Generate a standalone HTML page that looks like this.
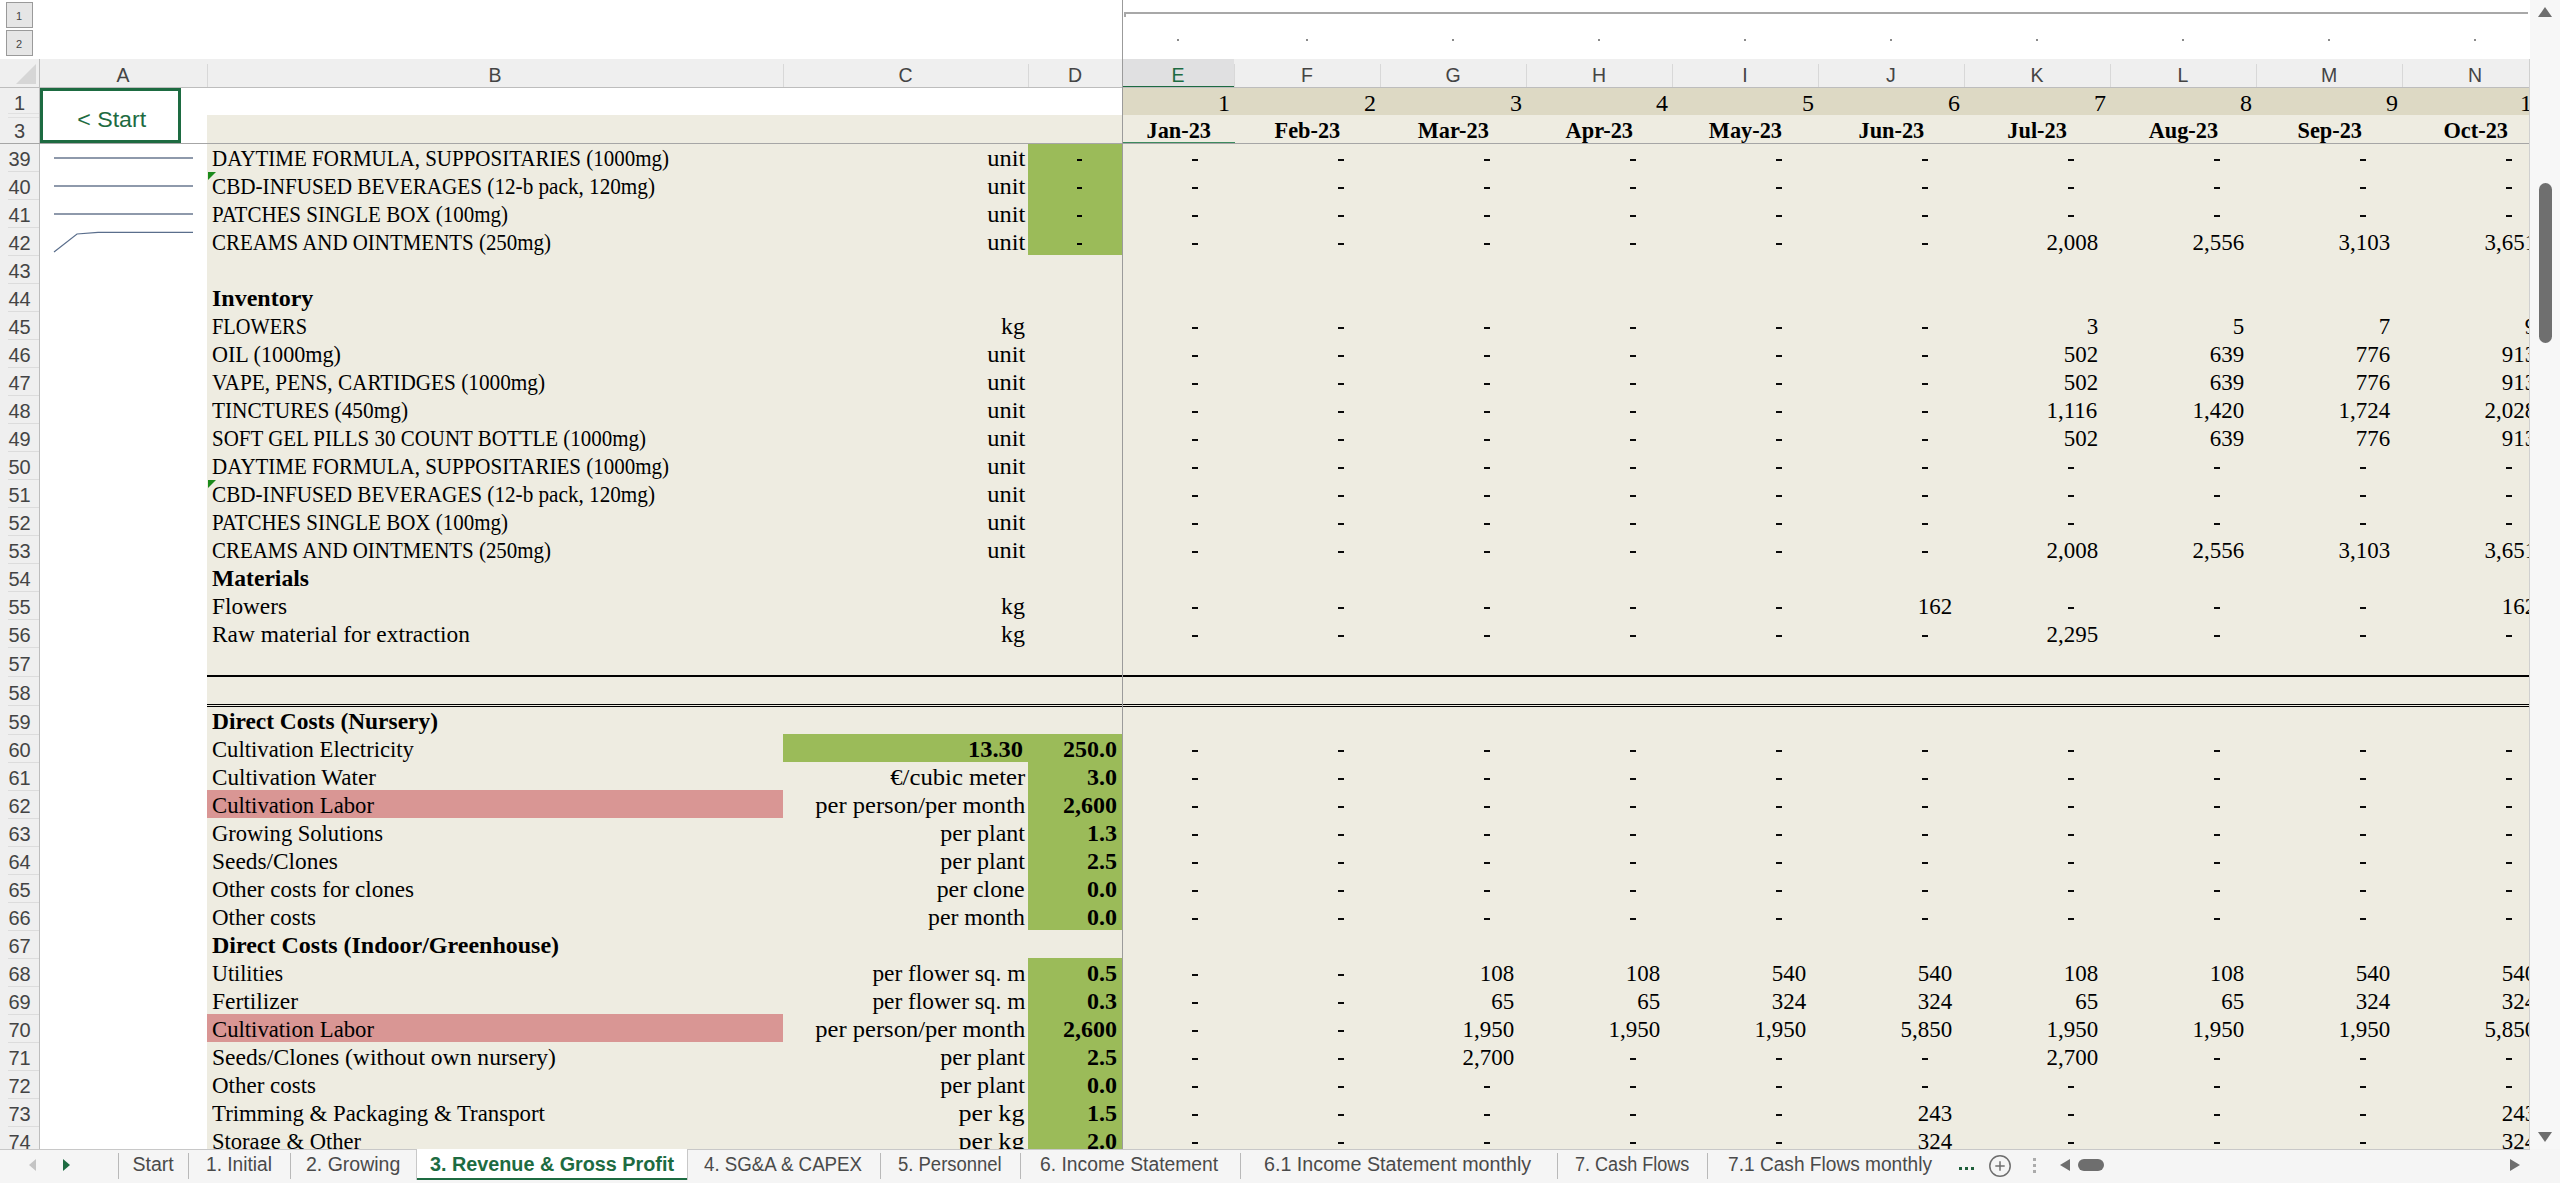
<!DOCTYPE html>
<html><head><meta charset="utf-8"><title>Revenue & Gross Profit</title>
<style>
html,body{margin:0;padding:0;background:#fff;}
#root{position:relative;width:2560px;height:1183px;overflow:hidden;}
#root > div, #root > svg{position:absolute;}
</style></head><body><div id="root">
<div style="left:0px;top:0px;width:2560px;height:1183px;background:#FFFFFF;"></div>
<div style="left:207px;top:115px;width:2323px;height:28px;background:#EEECE1;"></div>
<div style="left:207px;top:143px;width:2323px;height:28px;background:#EEECE1;"></div>
<div style="left:207px;top:171px;width:2323px;height:28px;background:#EEECE1;"></div>
<div style="left:207px;top:199px;width:2323px;height:28px;background:#EEECE1;"></div>
<div style="left:207px;top:227px;width:2323px;height:28px;background:#EEECE1;"></div>
<div style="left:207px;top:255px;width:2323px;height:28px;background:#EEECE1;"></div>
<div style="left:207px;top:283px;width:2323px;height:28px;background:#EEECE1;"></div>
<div style="left:207px;top:311px;width:2323px;height:28px;background:#EEECE1;"></div>
<div style="left:207px;top:339px;width:2323px;height:28px;background:#EEECE1;"></div>
<div style="left:207px;top:367px;width:2323px;height:28px;background:#EEECE1;"></div>
<div style="left:207px;top:395px;width:2323px;height:28px;background:#EEECE1;"></div>
<div style="left:207px;top:423px;width:2323px;height:28px;background:#EEECE1;"></div>
<div style="left:207px;top:451px;width:2323px;height:28px;background:#EEECE1;"></div>
<div style="left:207px;top:479px;width:2323px;height:28px;background:#EEECE1;"></div>
<div style="left:207px;top:507px;width:2323px;height:28px;background:#EEECE1;"></div>
<div style="left:207px;top:535px;width:2323px;height:28px;background:#EEECE1;"></div>
<div style="left:207px;top:563px;width:2323px;height:28px;background:#EEECE1;"></div>
<div style="left:207px;top:591px;width:2323px;height:28px;background:#EEECE1;"></div>
<div style="left:207px;top:619px;width:2323px;height:28px;background:#EEECE1;"></div>
<div style="left:207px;top:647px;width:2323px;height:29px;background:#EEECE1;"></div>
<div style="left:207px;top:676px;width:2323px;height:29px;background:#EEECE1;"></div>
<div style="left:207px;top:705px;width:2323px;height:29px;background:#EEECE1;"></div>
<div style="left:207px;top:734px;width:2323px;height:28px;background:#EEECE1;"></div>
<div style="left:207px;top:762px;width:2323px;height:28px;background:#EEECE1;"></div>
<div style="left:207px;top:790px;width:2323px;height:28px;background:#EEECE1;"></div>
<div style="left:207px;top:818px;width:2323px;height:28px;background:#EEECE1;"></div>
<div style="left:207px;top:846px;width:2323px;height:28px;background:#EEECE1;"></div>
<div style="left:207px;top:874px;width:2323px;height:28px;background:#EEECE1;"></div>
<div style="left:207px;top:902px;width:2323px;height:28px;background:#EEECE1;"></div>
<div style="left:207px;top:930px;width:2323px;height:28px;background:#EEECE1;"></div>
<div style="left:207px;top:958px;width:2323px;height:28px;background:#EEECE1;"></div>
<div style="left:207px;top:986px;width:2323px;height:28px;background:#EEECE1;"></div>
<div style="left:207px;top:1014px;width:2323px;height:28px;background:#EEECE1;"></div>
<div style="left:207px;top:1042px;width:2323px;height:28px;background:#EEECE1;"></div>
<div style="left:207px;top:1070px;width:2323px;height:28px;background:#EEECE1;"></div>
<div style="left:207px;top:1098px;width:2323px;height:28px;background:#EEECE1;"></div>
<div style="left:207px;top:1126px;width:2323px;height:23px;background:#EEECE1;"></div>
<div style="left:1122px;top:87px;width:1408px;height:28px;background:#DDD9C4;"></div>
<div style="left:1028px;top:143px;width:94px;height:112px;background:#9BBB59;"></div>
<div style="left:783px;top:734px;width:339px;height:28px;background:#9BBB59;"></div>
<div style="left:1028px;top:762px;width:94px;height:168px;background:#9BBB59;"></div>
<div style="left:1028px;top:958px;width:94px;height:191px;background:#9BBB59;"></div>
<div style="left:207px;top:790px;width:576px;height:28px;background:#D99694;"></div>
<div style="left:207px;top:1014px;width:576px;height:28px;background:#D99694;"></div>
<div style="left:207px;top:675px;width:2323px;height:2px;background:#000;"></div>
<div style="left:207px;top:704px;width:2323px;height:1px;background:#000;"></div>
<div style="left:207px;top:706px;width:2323px;height:1px;background:#000;"></div>
<div style="left:212.00px;top:143.40px;width:524.56px;height:31px;line-height:31px;font-family:'Liberation Serif', serif;font-size:24px;color:#000;white-space:nowrap;transform:scaleX(0.8745);transform-origin:left;">DAYTIME FORMULA, SUPPOSITARIES (1000mg)</div>
<div style="left:212.00px;top:171.40px;width:504.00px;height:31px;line-height:31px;font-family:'Liberation Serif', serif;font-size:24px;color:#000;white-space:nowrap;transform:scaleX(0.8825);transform-origin:left;">CBD-INFUSED BEVERAGES (12-b pack, 120mg)</div>
<div style="left:212.00px;top:199.40px;width:340.47px;height:31px;line-height:31px;font-family:'Liberation Serif', serif;font-size:24px;color:#000;white-space:nowrap;transform:scaleX(0.8745);transform-origin:left;">PATCHES SINGLE BOX (100mg)</div>
<div style="left:212.00px;top:227.40px;width:390.67px;height:31px;line-height:31px;font-family:'Liberation Serif', serif;font-size:24px;color:#000;white-space:nowrap;transform:scaleX(0.8722);transform-origin:left;">CREAMS AND OINTMENTS (250mg)</div>
<div style="left:212.00px;top:283.40px;width:103.34px;height:31px;line-height:31px;font-family:'Liberation Serif', serif;font-size:24px;font-weight:bold;color:#000;white-space:nowrap;">Inventory</div>
<div style="left:212.00px;top:311.40px;width:114.00px;height:31px;line-height:31px;font-family:'Liberation Serif', serif;font-size:24px;color:#000;white-space:nowrap;transform:scaleX(0.8482);transform-origin:left;">FLOWERS</div>
<div style="left:212.00px;top:339.40px;width:141.77px;height:31px;line-height:31px;font-family:'Liberation Serif', serif;font-size:24px;color:#000;white-space:nowrap;transform:scaleX(0.9230);transform-origin:left;">OIL (1000mg)</div>
<div style="left:212.00px;top:367.40px;width:378.14px;height:31px;line-height:31px;font-family:'Liberation Serif', serif;font-size:24px;color:#000;white-space:nowrap;transform:scaleX(0.8853);transform-origin:left;">VAPE, PENS, CARTIDGES (1000mg)</div>
<div style="left:212.00px;top:395.40px;width:222.67px;height:31px;line-height:31px;font-family:'Liberation Serif', serif;font-size:24px;color:#000;white-space:nowrap;transform:scaleX(0.8882);transform-origin:left;">TINCTURES (450mg)</div>
<div style="left:212.00px;top:423.40px;width:498.84px;height:31px;line-height:31px;font-family:'Liberation Serif', serif;font-size:24px;color:#000;white-space:nowrap;transform:scaleX(0.8735);transform-origin:left;">SOFT GEL PILLS 30 COUNT BOTTLE (1000mg)</div>
<div style="left:212.00px;top:451.40px;width:524.56px;height:31px;line-height:31px;font-family:'Liberation Serif', serif;font-size:24px;color:#000;white-space:nowrap;transform:scaleX(0.8745);transform-origin:left;">DAYTIME FORMULA, SUPPOSITARIES (1000mg)</div>
<div style="left:212.00px;top:479.40px;width:504.00px;height:31px;line-height:31px;font-family:'Liberation Serif', serif;font-size:24px;color:#000;white-space:nowrap;transform:scaleX(0.8825);transform-origin:left;">CBD-INFUSED BEVERAGES (12-b pack, 120mg)</div>
<div style="left:212.00px;top:507.40px;width:340.47px;height:31px;line-height:31px;font-family:'Liberation Serif', serif;font-size:24px;color:#000;white-space:nowrap;transform:scaleX(0.8745);transform-origin:left;">PATCHES SINGLE BOX (100mg)</div>
<div style="left:212.00px;top:535.40px;width:390.67px;height:31px;line-height:31px;font-family:'Liberation Serif', serif;font-size:24px;color:#000;white-space:nowrap;transform:scaleX(0.8722);transform-origin:left;">CREAMS AND OINTMENTS (250mg)</div>
<div style="left:212.00px;top:563.40px;width:100.66px;height:31px;line-height:31px;font-family:'Liberation Serif', serif;font-size:24px;font-weight:bold;color:#000;white-space:nowrap;transform:scaleX(0.9832);transform-origin:left;">Materials</div>
<div style="left:212.00px;top:591.40px;width:79.34px;height:31px;line-height:31px;font-family:'Liberation Serif', serif;font-size:24px;color:#000;white-space:nowrap;transform:scaleX(0.9697);transform-origin:left;">Flowers</div>
<div style="left:212.00px;top:619.40px;width:266.64px;height:31px;line-height:31px;font-family:'Liberation Serif', serif;font-size:24px;color:#000;white-space:nowrap;transform:scaleX(0.9749);transform-origin:left;">Raw material for extraction</div>
<div style="left:212.00px;top:706.40px;width:233.53px;height:31px;line-height:31px;font-family:'Liberation Serif', serif;font-size:24px;font-weight:bold;color:#000;white-space:nowrap;transform:scaleX(0.9761);transform-origin:left;">Direct Costs (Nursery)</div>
<div style="left:212.00px;top:734.40px;width:216.02px;height:31px;line-height:31px;font-family:'Liberation Serif', serif;font-size:24px;color:#000;white-space:nowrap;transform:scaleX(0.9439);transform-origin:left;">Cultivation Electricity</div>
<div style="left:212.00px;top:762.40px;width:172.31px;height:31px;line-height:31px;font-family:'Liberation Serif', serif;font-size:24px;color:#000;white-space:nowrap;transform:scaleX(0.9629);transform-origin:left;">Cultivation Water</div>
<div style="left:212.00px;top:790.40px;width:173.34px;height:31px;line-height:31px;font-family:'Liberation Serif', serif;font-size:24px;color:#000;white-space:nowrap;transform:scaleX(0.9455);transform-origin:left;">Cultivation Labor</div>
<div style="left:212.00px;top:818.40px;width:184.03px;height:31px;line-height:31px;font-family:'Liberation Serif', serif;font-size:24px;color:#000;white-space:nowrap;transform:scaleX(0.9394);transform-origin:left;">Growing Solutions</div>
<div style="left:212.00px;top:846.40px;width:131.36px;height:31px;line-height:31px;font-family:'Liberation Serif', serif;font-size:24px;color:#000;white-space:nowrap;transform:scaleX(0.9740);transform-origin:left;">Seeds/Clones</div>
<div style="left:212.00px;top:874.40px;width:212.00px;height:31px;line-height:31px;font-family:'Liberation Serif', serif;font-size:24px;color:#000;white-space:nowrap;transform:scaleX(0.9619);transform-origin:left;">Other costs for clones</div>
<div style="left:212.00px;top:902.40px;width:110.67px;height:31px;line-height:31px;font-family:'Liberation Serif', serif;font-size:24px;color:#000;white-space:nowrap;transform:scaleX(0.9570);transform-origin:left;">Other costs</div>
<div style="left:212.00px;top:930.40px;width:349.14px;height:31px;line-height:31px;font-family:'Liberation Serif', serif;font-size:24px;font-weight:bold;color:#000;white-space:nowrap;">Direct Costs (Indoor/Greenhouse)</div>
<div style="left:212.00px;top:958.40px;width:79.36px;height:31px;line-height:31px;font-family:'Liberation Serif', serif;font-size:24px;color:#000;white-space:nowrap;transform:scaleX(0.9178);transform-origin:left;">Utilities</div>
<div style="left:212.00px;top:986.40px;width:90.00px;height:31px;line-height:31px;font-family:'Liberation Serif', serif;font-size:24px;color:#000;white-space:nowrap;transform:scaleX(0.9773);transform-origin:left;">Fertilizer</div>
<div style="left:212.00px;top:1014.40px;width:173.34px;height:31px;line-height:31px;font-family:'Liberation Serif', serif;font-size:24px;color:#000;white-space:nowrap;transform:scaleX(0.9455);transform-origin:left;">Cultivation Labor</div>
<div style="left:212.00px;top:1042.40px;width:352.03px;height:31px;line-height:31px;font-family:'Liberation Serif', serif;font-size:24px;color:#000;white-space:nowrap;transform:scaleX(0.9828);transform-origin:left;">Seeds/Clones (without own nursery)</div>
<div style="left:212.00px;top:1070.40px;width:110.67px;height:31px;line-height:31px;font-family:'Liberation Serif', serif;font-size:24px;color:#000;white-space:nowrap;transform:scaleX(0.9570);transform-origin:left;">Other costs</div>
<div style="left:212.00px;top:1098.40px;width:351.88px;height:31px;line-height:31px;font-family:'Liberation Serif', serif;font-size:24px;color:#000;white-space:nowrap;transform:scaleX(0.9518);transform-origin:left;">Trimming &amp; Packaging &amp; Transport</div>
<div style="left:212.00px;top:1126.40px;width:160.66px;height:31px;line-height:31px;font-family:'Liberation Serif', serif;font-size:24px;color:#000;white-space:nowrap;transform:scaleX(0.9391);transform-origin:left;">Storage &amp; Other</div>
<div style="left:987.66px;top:143.40px;width:39.34px;height:31px;line-height:31px;font-family:'Liberation Serif', serif;font-size:24px;color:#000;white-space:nowrap;transform:scaleX(1.0176);transform-origin:right;">unit</div>
<div style="left:987.66px;top:171.40px;width:39.34px;height:31px;line-height:31px;font-family:'Liberation Serif', serif;font-size:24px;color:#000;white-space:nowrap;transform:scaleX(1.0176);transform-origin:right;">unit</div>
<div style="left:987.66px;top:199.40px;width:39.34px;height:31px;line-height:31px;font-family:'Liberation Serif', serif;font-size:24px;color:#000;white-space:nowrap;transform:scaleX(1.0176);transform-origin:right;">unit</div>
<div style="left:987.66px;top:227.40px;width:39.34px;height:31px;line-height:31px;font-family:'Liberation Serif', serif;font-size:24px;color:#000;white-space:nowrap;transform:scaleX(1.0176);transform-origin:right;">unit</div>
<div style="left:1001.00px;top:311.40px;width:26.00px;height:31px;line-height:31px;font-family:'Liberation Serif', serif;font-size:24px;color:#000;white-space:nowrap;">kg</div>
<div style="left:987.66px;top:339.40px;width:39.34px;height:31px;line-height:31px;font-family:'Liberation Serif', serif;font-size:24px;color:#000;white-space:nowrap;transform:scaleX(1.0176);transform-origin:right;">unit</div>
<div style="left:987.66px;top:367.40px;width:39.34px;height:31px;line-height:31px;font-family:'Liberation Serif', serif;font-size:24px;color:#000;white-space:nowrap;transform:scaleX(1.0176);transform-origin:right;">unit</div>
<div style="left:987.66px;top:395.40px;width:39.34px;height:31px;line-height:31px;font-family:'Liberation Serif', serif;font-size:24px;color:#000;white-space:nowrap;transform:scaleX(1.0176);transform-origin:right;">unit</div>
<div style="left:987.66px;top:423.40px;width:39.34px;height:31px;line-height:31px;font-family:'Liberation Serif', serif;font-size:24px;color:#000;white-space:nowrap;transform:scaleX(1.0176);transform-origin:right;">unit</div>
<div style="left:987.66px;top:451.40px;width:39.34px;height:31px;line-height:31px;font-family:'Liberation Serif', serif;font-size:24px;color:#000;white-space:nowrap;transform:scaleX(1.0176);transform-origin:right;">unit</div>
<div style="left:987.66px;top:479.40px;width:39.34px;height:31px;line-height:31px;font-family:'Liberation Serif', serif;font-size:24px;color:#000;white-space:nowrap;transform:scaleX(1.0176);transform-origin:right;">unit</div>
<div style="left:987.66px;top:507.40px;width:39.34px;height:31px;line-height:31px;font-family:'Liberation Serif', serif;font-size:24px;color:#000;white-space:nowrap;transform:scaleX(1.0176);transform-origin:right;">unit</div>
<div style="left:987.66px;top:535.40px;width:39.34px;height:31px;line-height:31px;font-family:'Liberation Serif', serif;font-size:24px;color:#000;white-space:nowrap;transform:scaleX(1.0176);transform-origin:right;">unit</div>
<div style="left:1001.00px;top:591.40px;width:26.00px;height:31px;line-height:31px;font-family:'Liberation Serif', serif;font-size:24px;color:#000;white-space:nowrap;">kg</div>
<div style="left:1001.00px;top:619.40px;width:26.00px;height:31px;line-height:31px;font-family:'Liberation Serif', serif;font-size:24px;color:#000;white-space:nowrap;">kg</div>
<div style="left:893.69px;top:762.40px;width:133.31px;height:31px;line-height:31px;font-family:'Liberation Serif', serif;font-size:24px;color:#000;white-space:nowrap;transform:scaleX(1.0281);transform-origin:right;">€/cubic meter</div>
<div style="left:819.67px;top:790.40px;width:207.33px;height:31px;line-height:31px;font-family:'Liberation Serif', serif;font-size:24px;color:#000;white-space:nowrap;transform:scaleX(1.0228);transform-origin:right;">per person/per month</div>
<div style="left:940.34px;top:818.40px;width:86.66px;height:31px;line-height:31px;font-family:'Liberation Serif', serif;font-size:24px;color:#000;white-space:nowrap;">per plant</div>
<div style="left:940.34px;top:846.40px;width:86.66px;height:31px;line-height:31px;font-family:'Liberation Serif', serif;font-size:24px;color:#000;white-space:nowrap;">per plant</div>
<div style="left:936.36px;top:874.40px;width:90.64px;height:31px;line-height:31px;font-family:'Liberation Serif', serif;font-size:24px;color:#000;white-space:nowrap;transform:scaleX(0.9928);transform-origin:right;">per clone</div>
<div style="left:927.00px;top:902.40px;width:100.00px;height:31px;line-height:31px;font-family:'Liberation Serif', serif;font-size:24px;color:#000;white-space:nowrap;transform:scaleX(0.9898);transform-origin:right;">per month</div>
<div style="left:867.67px;top:958.40px;width:159.33px;height:31px;line-height:31px;font-family:'Liberation Serif', serif;font-size:24px;color:#000;white-space:nowrap;transform:scaleX(0.9725);transform-origin:right;">per flower sq. m</div>
<div style="left:867.67px;top:986.40px;width:159.33px;height:31px;line-height:31px;font-family:'Liberation Serif', serif;font-size:24px;color:#000;white-space:nowrap;transform:scaleX(0.9725);transform-origin:right;">per flower sq. m</div>
<div style="left:819.67px;top:1014.40px;width:207.33px;height:31px;line-height:31px;font-family:'Liberation Serif', serif;font-size:24px;color:#000;white-space:nowrap;transform:scaleX(1.0228);transform-origin:right;">per person/per month</div>
<div style="left:940.34px;top:1042.40px;width:86.66px;height:31px;line-height:31px;font-family:'Liberation Serif', serif;font-size:24px;color:#000;white-space:nowrap;">per plant</div>
<div style="left:940.34px;top:1070.40px;width:86.66px;height:31px;line-height:31px;font-family:'Liberation Serif', serif;font-size:24px;color:#000;white-space:nowrap;">per plant</div>
<div style="left:964.34px;top:1098.40px;width:62.66px;height:31px;line-height:31px;font-family:'Liberation Serif', serif;font-size:24px;color:#000;white-space:nowrap;transform:scaleX(1.0881);transform-origin:right;">per kg</div>
<div style="left:964.34px;top:1126.40px;width:62.66px;height:31px;line-height:31px;font-family:'Liberation Serif', serif;font-size:24px;color:#000;white-space:nowrap;transform:scaleX(1.0881);transform-origin:right;">per kg</div>
<div style="left:969.00px;top:734.40px;width:56.00px;height:31px;line-height:31px;font-family:'Liberation Serif', serif;font-size:24px;font-weight:bold;color:#000;white-space:nowrap;transform:scaleX(1.0185);transform-origin:right;">13.30</div>
<div style="left:1077px;top:159px;width:5px;height:2px;background:#000;"></div>
<div style="left:1077px;top:187px;width:5px;height:2px;background:#000;"></div>
<div style="left:1077px;top:215px;width:5px;height:2px;background:#000;"></div>
<div style="left:1077px;top:243px;width:5px;height:2px;background:#000;"></div>
<div style="left:1063.00px;top:734.40px;width:56.00px;height:31px;line-height:31px;font-family:'Liberation Serif', serif;font-size:24px;font-weight:bold;color:#000;white-space:nowrap;">250.0</div>
<div style="left:1087.00px;top:762.40px;width:32.00px;height:31px;line-height:31px;font-family:'Liberation Serif', serif;font-size:24px;font-weight:bold;color:#000;white-space:nowrap;">3.0</div>
<div style="left:1063.00px;top:790.40px;width:56.00px;height:31px;line-height:31px;font-family:'Liberation Serif', serif;font-size:24px;font-weight:bold;color:#000;white-space:nowrap;">2,600</div>
<div style="left:1087.00px;top:818.40px;width:32.00px;height:31px;line-height:31px;font-family:'Liberation Serif', serif;font-size:24px;font-weight:bold;color:#000;white-space:nowrap;">1.3</div>
<div style="left:1087.00px;top:846.40px;width:32.00px;height:31px;line-height:31px;font-family:'Liberation Serif', serif;font-size:24px;font-weight:bold;color:#000;white-space:nowrap;">2.5</div>
<div style="left:1087.00px;top:874.40px;width:32.00px;height:31px;line-height:31px;font-family:'Liberation Serif', serif;font-size:24px;font-weight:bold;color:#000;white-space:nowrap;">0.0</div>
<div style="left:1087.00px;top:902.40px;width:32.00px;height:31px;line-height:31px;font-family:'Liberation Serif', serif;font-size:24px;font-weight:bold;color:#000;white-space:nowrap;">0.0</div>
<div style="left:1087.00px;top:958.40px;width:32.00px;height:31px;line-height:31px;font-family:'Liberation Serif', serif;font-size:24px;font-weight:bold;color:#000;white-space:nowrap;">0.5</div>
<div style="left:1087.00px;top:986.40px;width:32.00px;height:31px;line-height:31px;font-family:'Liberation Serif', serif;font-size:24px;font-weight:bold;color:#000;white-space:nowrap;">0.3</div>
<div style="left:1063.00px;top:1014.40px;width:56.00px;height:31px;line-height:31px;font-family:'Liberation Serif', serif;font-size:24px;font-weight:bold;color:#000;white-space:nowrap;">2,600</div>
<div style="left:1087.00px;top:1042.40px;width:32.00px;height:31px;line-height:31px;font-family:'Liberation Serif', serif;font-size:24px;font-weight:bold;color:#000;white-space:nowrap;">2.5</div>
<div style="left:1087.00px;top:1070.40px;width:32.00px;height:31px;line-height:31px;font-family:'Liberation Serif', serif;font-size:24px;font-weight:bold;color:#000;white-space:nowrap;">0.0</div>
<div style="left:1087.00px;top:1098.40px;width:32.00px;height:31px;line-height:31px;font-family:'Liberation Serif', serif;font-size:24px;font-weight:bold;color:#000;white-space:nowrap;">1.5</div>
<div style="left:1087.00px;top:1126.40px;width:32.00px;height:31px;line-height:31px;font-family:'Liberation Serif', serif;font-size:24px;font-weight:bold;color:#000;white-space:nowrap;">2.0</div>
<div style="left:1192px;top:159px;width:6px;height:2px;background:#0a0a0a;"></div>
<div style="left:1338px;top:159px;width:6px;height:2px;background:#0a0a0a;"></div>
<div style="left:1484px;top:159px;width:6px;height:2px;background:#0a0a0a;"></div>
<div style="left:1630px;top:159px;width:6px;height:2px;background:#0a0a0a;"></div>
<div style="left:1776px;top:159px;width:6px;height:2px;background:#0a0a0a;"></div>
<div style="left:1922px;top:159px;width:6px;height:2px;background:#0a0a0a;"></div>
<div style="left:2068px;top:159px;width:6px;height:2px;background:#0a0a0a;"></div>
<div style="left:2214px;top:159px;width:6px;height:2px;background:#0a0a0a;"></div>
<div style="left:2360px;top:159px;width:6px;height:2px;background:#0a0a0a;"></div>
<div style="left:2506px;top:159px;width:6px;height:2px;background:#0a0a0a;"></div>
<div style="left:1192px;top:187px;width:6px;height:2px;background:#0a0a0a;"></div>
<div style="left:1338px;top:187px;width:6px;height:2px;background:#0a0a0a;"></div>
<div style="left:1484px;top:187px;width:6px;height:2px;background:#0a0a0a;"></div>
<div style="left:1630px;top:187px;width:6px;height:2px;background:#0a0a0a;"></div>
<div style="left:1776px;top:187px;width:6px;height:2px;background:#0a0a0a;"></div>
<div style="left:1922px;top:187px;width:6px;height:2px;background:#0a0a0a;"></div>
<div style="left:2068px;top:187px;width:6px;height:2px;background:#0a0a0a;"></div>
<div style="left:2214px;top:187px;width:6px;height:2px;background:#0a0a0a;"></div>
<div style="left:2360px;top:187px;width:6px;height:2px;background:#0a0a0a;"></div>
<div style="left:2506px;top:187px;width:6px;height:2px;background:#0a0a0a;"></div>
<div style="left:1192px;top:215px;width:6px;height:2px;background:#0a0a0a;"></div>
<div style="left:1338px;top:215px;width:6px;height:2px;background:#0a0a0a;"></div>
<div style="left:1484px;top:215px;width:6px;height:2px;background:#0a0a0a;"></div>
<div style="left:1630px;top:215px;width:6px;height:2px;background:#0a0a0a;"></div>
<div style="left:1776px;top:215px;width:6px;height:2px;background:#0a0a0a;"></div>
<div style="left:1922px;top:215px;width:6px;height:2px;background:#0a0a0a;"></div>
<div style="left:2068px;top:215px;width:6px;height:2px;background:#0a0a0a;"></div>
<div style="left:2214px;top:215px;width:6px;height:2px;background:#0a0a0a;"></div>
<div style="left:2360px;top:215px;width:6px;height:2px;background:#0a0a0a;"></div>
<div style="left:2506px;top:215px;width:6px;height:2px;background:#0a0a0a;"></div>
<div style="left:1192px;top:243px;width:6px;height:2px;background:#0a0a0a;"></div>
<div style="left:1338px;top:243px;width:6px;height:2px;background:#0a0a0a;"></div>
<div style="left:1484px;top:243px;width:6px;height:2px;background:#0a0a0a;"></div>
<div style="left:1630px;top:243px;width:6px;height:2px;background:#0a0a0a;"></div>
<div style="left:1776px;top:243px;width:6px;height:2px;background:#0a0a0a;"></div>
<div style="left:1922px;top:243px;width:6px;height:2px;background:#0a0a0a;"></div>
<div style="left:2043.50px;top:227.40px;width:56.00px;height:31px;line-height:31px;font-family:'Liberation Serif', serif;font-size:24px;color:#000;white-space:nowrap;transform:scaleX(0.9550);transform-origin:right;">2,008</div>
<div style="left:2189.50px;top:227.40px;width:56.00px;height:31px;line-height:31px;font-family:'Liberation Serif', serif;font-size:24px;color:#000;white-space:nowrap;transform:scaleX(0.9550);transform-origin:right;">2,556</div>
<div style="left:2335.50px;top:227.40px;width:56.00px;height:31px;line-height:31px;font-family:'Liberation Serif', serif;font-size:24px;color:#000;white-space:nowrap;transform:scaleX(0.9550);transform-origin:right;">3,103</div>
<div style="left:2481.50px;top:227.40px;width:56.00px;height:31px;line-height:31px;font-family:'Liberation Serif', serif;font-size:24px;color:#000;white-space:nowrap;transform:scaleX(0.9550);transform-origin:right;">3,651</div>
<div style="left:1192px;top:327px;width:6px;height:2px;background:#0a0a0a;"></div>
<div style="left:1338px;top:327px;width:6px;height:2px;background:#0a0a0a;"></div>
<div style="left:1484px;top:327px;width:6px;height:2px;background:#0a0a0a;"></div>
<div style="left:1630px;top:327px;width:6px;height:2px;background:#0a0a0a;"></div>
<div style="left:1776px;top:327px;width:6px;height:2px;background:#0a0a0a;"></div>
<div style="left:1922px;top:327px;width:6px;height:2px;background:#0a0a0a;"></div>
<div style="left:2085.50px;top:311.40px;width:14.00px;height:31px;line-height:31px;font-family:'Liberation Serif', serif;font-size:24px;color:#000;white-space:nowrap;transform:scaleX(0.9550);transform-origin:right;">3</div>
<div style="left:2231.50px;top:311.40px;width:14.00px;height:31px;line-height:31px;font-family:'Liberation Serif', serif;font-size:24px;color:#000;white-space:nowrap;transform:scaleX(0.9550);transform-origin:right;">5</div>
<div style="left:2377.50px;top:311.40px;width:14.00px;height:31px;line-height:31px;font-family:'Liberation Serif', serif;font-size:24px;color:#000;white-space:nowrap;transform:scaleX(0.9550);transform-origin:right;">7</div>
<div style="left:2523.50px;top:311.40px;width:14.00px;height:31px;line-height:31px;font-family:'Liberation Serif', serif;font-size:24px;color:#000;white-space:nowrap;transform:scaleX(0.9550);transform-origin:right;">9</div>
<div style="left:1192px;top:355px;width:6px;height:2px;background:#0a0a0a;"></div>
<div style="left:1338px;top:355px;width:6px;height:2px;background:#0a0a0a;"></div>
<div style="left:1484px;top:355px;width:6px;height:2px;background:#0a0a0a;"></div>
<div style="left:1630px;top:355px;width:6px;height:2px;background:#0a0a0a;"></div>
<div style="left:1776px;top:355px;width:6px;height:2px;background:#0a0a0a;"></div>
<div style="left:1922px;top:355px;width:6px;height:2px;background:#0a0a0a;"></div>
<div style="left:2061.50px;top:339.40px;width:38.00px;height:31px;line-height:31px;font-family:'Liberation Serif', serif;font-size:24px;color:#000;white-space:nowrap;transform:scaleX(0.9550);transform-origin:right;">502</div>
<div style="left:2207.50px;top:339.40px;width:38.00px;height:31px;line-height:31px;font-family:'Liberation Serif', serif;font-size:24px;color:#000;white-space:nowrap;transform:scaleX(0.9550);transform-origin:right;">639</div>
<div style="left:2353.50px;top:339.40px;width:38.00px;height:31px;line-height:31px;font-family:'Liberation Serif', serif;font-size:24px;color:#000;white-space:nowrap;transform:scaleX(0.9550);transform-origin:right;">776</div>
<div style="left:2499.50px;top:339.40px;width:38.00px;height:31px;line-height:31px;font-family:'Liberation Serif', serif;font-size:24px;color:#000;white-space:nowrap;transform:scaleX(0.9550);transform-origin:right;">913</div>
<div style="left:1192px;top:383px;width:6px;height:2px;background:#0a0a0a;"></div>
<div style="left:1338px;top:383px;width:6px;height:2px;background:#0a0a0a;"></div>
<div style="left:1484px;top:383px;width:6px;height:2px;background:#0a0a0a;"></div>
<div style="left:1630px;top:383px;width:6px;height:2px;background:#0a0a0a;"></div>
<div style="left:1776px;top:383px;width:6px;height:2px;background:#0a0a0a;"></div>
<div style="left:1922px;top:383px;width:6px;height:2px;background:#0a0a0a;"></div>
<div style="left:2061.50px;top:367.40px;width:38.00px;height:31px;line-height:31px;font-family:'Liberation Serif', serif;font-size:24px;color:#000;white-space:nowrap;transform:scaleX(0.9550);transform-origin:right;">502</div>
<div style="left:2207.50px;top:367.40px;width:38.00px;height:31px;line-height:31px;font-family:'Liberation Serif', serif;font-size:24px;color:#000;white-space:nowrap;transform:scaleX(0.9550);transform-origin:right;">639</div>
<div style="left:2353.50px;top:367.40px;width:38.00px;height:31px;line-height:31px;font-family:'Liberation Serif', serif;font-size:24px;color:#000;white-space:nowrap;transform:scaleX(0.9550);transform-origin:right;">776</div>
<div style="left:2499.50px;top:367.40px;width:38.00px;height:31px;line-height:31px;font-family:'Liberation Serif', serif;font-size:24px;color:#000;white-space:nowrap;transform:scaleX(0.9550);transform-origin:right;">913</div>
<div style="left:1192px;top:411px;width:6px;height:2px;background:#0a0a0a;"></div>
<div style="left:1338px;top:411px;width:6px;height:2px;background:#0a0a0a;"></div>
<div style="left:1484px;top:411px;width:6px;height:2px;background:#0a0a0a;"></div>
<div style="left:1630px;top:411px;width:6px;height:2px;background:#0a0a0a;"></div>
<div style="left:1776px;top:411px;width:6px;height:2px;background:#0a0a0a;"></div>
<div style="left:1922px;top:411px;width:6px;height:2px;background:#0a0a0a;"></div>
<div style="left:2044.39px;top:395.40px;width:55.11px;height:31px;line-height:31px;font-family:'Liberation Serif', serif;font-size:24px;color:#000;white-space:nowrap;transform:scaleX(0.9550);transform-origin:right;">1,116</div>
<div style="left:2189.50px;top:395.40px;width:56.00px;height:31px;line-height:31px;font-family:'Liberation Serif', serif;font-size:24px;color:#000;white-space:nowrap;transform:scaleX(0.9550);transform-origin:right;">1,420</div>
<div style="left:2335.50px;top:395.40px;width:56.00px;height:31px;line-height:31px;font-family:'Liberation Serif', serif;font-size:24px;color:#000;white-space:nowrap;transform:scaleX(0.9550);transform-origin:right;">1,724</div>
<div style="left:2481.50px;top:395.40px;width:56.00px;height:31px;line-height:31px;font-family:'Liberation Serif', serif;font-size:24px;color:#000;white-space:nowrap;transform:scaleX(0.9550);transform-origin:right;">2,028</div>
<div style="left:1192px;top:439px;width:6px;height:2px;background:#0a0a0a;"></div>
<div style="left:1338px;top:439px;width:6px;height:2px;background:#0a0a0a;"></div>
<div style="left:1484px;top:439px;width:6px;height:2px;background:#0a0a0a;"></div>
<div style="left:1630px;top:439px;width:6px;height:2px;background:#0a0a0a;"></div>
<div style="left:1776px;top:439px;width:6px;height:2px;background:#0a0a0a;"></div>
<div style="left:1922px;top:439px;width:6px;height:2px;background:#0a0a0a;"></div>
<div style="left:2061.50px;top:423.40px;width:38.00px;height:31px;line-height:31px;font-family:'Liberation Serif', serif;font-size:24px;color:#000;white-space:nowrap;transform:scaleX(0.9550);transform-origin:right;">502</div>
<div style="left:2207.50px;top:423.40px;width:38.00px;height:31px;line-height:31px;font-family:'Liberation Serif', serif;font-size:24px;color:#000;white-space:nowrap;transform:scaleX(0.9550);transform-origin:right;">639</div>
<div style="left:2353.50px;top:423.40px;width:38.00px;height:31px;line-height:31px;font-family:'Liberation Serif', serif;font-size:24px;color:#000;white-space:nowrap;transform:scaleX(0.9550);transform-origin:right;">776</div>
<div style="left:2499.50px;top:423.40px;width:38.00px;height:31px;line-height:31px;font-family:'Liberation Serif', serif;font-size:24px;color:#000;white-space:nowrap;transform:scaleX(0.9550);transform-origin:right;">913</div>
<div style="left:1192px;top:467px;width:6px;height:2px;background:#0a0a0a;"></div>
<div style="left:1338px;top:467px;width:6px;height:2px;background:#0a0a0a;"></div>
<div style="left:1484px;top:467px;width:6px;height:2px;background:#0a0a0a;"></div>
<div style="left:1630px;top:467px;width:6px;height:2px;background:#0a0a0a;"></div>
<div style="left:1776px;top:467px;width:6px;height:2px;background:#0a0a0a;"></div>
<div style="left:1922px;top:467px;width:6px;height:2px;background:#0a0a0a;"></div>
<div style="left:2068px;top:467px;width:6px;height:2px;background:#0a0a0a;"></div>
<div style="left:2214px;top:467px;width:6px;height:2px;background:#0a0a0a;"></div>
<div style="left:2360px;top:467px;width:6px;height:2px;background:#0a0a0a;"></div>
<div style="left:2506px;top:467px;width:6px;height:2px;background:#0a0a0a;"></div>
<div style="left:1192px;top:495px;width:6px;height:2px;background:#0a0a0a;"></div>
<div style="left:1338px;top:495px;width:6px;height:2px;background:#0a0a0a;"></div>
<div style="left:1484px;top:495px;width:6px;height:2px;background:#0a0a0a;"></div>
<div style="left:1630px;top:495px;width:6px;height:2px;background:#0a0a0a;"></div>
<div style="left:1776px;top:495px;width:6px;height:2px;background:#0a0a0a;"></div>
<div style="left:1922px;top:495px;width:6px;height:2px;background:#0a0a0a;"></div>
<div style="left:2068px;top:495px;width:6px;height:2px;background:#0a0a0a;"></div>
<div style="left:2214px;top:495px;width:6px;height:2px;background:#0a0a0a;"></div>
<div style="left:2360px;top:495px;width:6px;height:2px;background:#0a0a0a;"></div>
<div style="left:2506px;top:495px;width:6px;height:2px;background:#0a0a0a;"></div>
<div style="left:1192px;top:523px;width:6px;height:2px;background:#0a0a0a;"></div>
<div style="left:1338px;top:523px;width:6px;height:2px;background:#0a0a0a;"></div>
<div style="left:1484px;top:523px;width:6px;height:2px;background:#0a0a0a;"></div>
<div style="left:1630px;top:523px;width:6px;height:2px;background:#0a0a0a;"></div>
<div style="left:1776px;top:523px;width:6px;height:2px;background:#0a0a0a;"></div>
<div style="left:1922px;top:523px;width:6px;height:2px;background:#0a0a0a;"></div>
<div style="left:2068px;top:523px;width:6px;height:2px;background:#0a0a0a;"></div>
<div style="left:2214px;top:523px;width:6px;height:2px;background:#0a0a0a;"></div>
<div style="left:2360px;top:523px;width:6px;height:2px;background:#0a0a0a;"></div>
<div style="left:2506px;top:523px;width:6px;height:2px;background:#0a0a0a;"></div>
<div style="left:1192px;top:551px;width:6px;height:2px;background:#0a0a0a;"></div>
<div style="left:1338px;top:551px;width:6px;height:2px;background:#0a0a0a;"></div>
<div style="left:1484px;top:551px;width:6px;height:2px;background:#0a0a0a;"></div>
<div style="left:1630px;top:551px;width:6px;height:2px;background:#0a0a0a;"></div>
<div style="left:1776px;top:551px;width:6px;height:2px;background:#0a0a0a;"></div>
<div style="left:1922px;top:551px;width:6px;height:2px;background:#0a0a0a;"></div>
<div style="left:2043.50px;top:535.40px;width:56.00px;height:31px;line-height:31px;font-family:'Liberation Serif', serif;font-size:24px;color:#000;white-space:nowrap;transform:scaleX(0.9550);transform-origin:right;">2,008</div>
<div style="left:2189.50px;top:535.40px;width:56.00px;height:31px;line-height:31px;font-family:'Liberation Serif', serif;font-size:24px;color:#000;white-space:nowrap;transform:scaleX(0.9550);transform-origin:right;">2,556</div>
<div style="left:2335.50px;top:535.40px;width:56.00px;height:31px;line-height:31px;font-family:'Liberation Serif', serif;font-size:24px;color:#000;white-space:nowrap;transform:scaleX(0.9550);transform-origin:right;">3,103</div>
<div style="left:2481.50px;top:535.40px;width:56.00px;height:31px;line-height:31px;font-family:'Liberation Serif', serif;font-size:24px;color:#000;white-space:nowrap;transform:scaleX(0.9550);transform-origin:right;">3,651</div>
<div style="left:1192px;top:607px;width:6px;height:2px;background:#0a0a0a;"></div>
<div style="left:1338px;top:607px;width:6px;height:2px;background:#0a0a0a;"></div>
<div style="left:1484px;top:607px;width:6px;height:2px;background:#0a0a0a;"></div>
<div style="left:1630px;top:607px;width:6px;height:2px;background:#0a0a0a;"></div>
<div style="left:1776px;top:607px;width:6px;height:2px;background:#0a0a0a;"></div>
<div style="left:1915.50px;top:591.40px;width:38.00px;height:31px;line-height:31px;font-family:'Liberation Serif', serif;font-size:24px;color:#000;white-space:nowrap;transform:scaleX(0.9550);transform-origin:right;">162</div>
<div style="left:2068px;top:607px;width:6px;height:2px;background:#0a0a0a;"></div>
<div style="left:2214px;top:607px;width:6px;height:2px;background:#0a0a0a;"></div>
<div style="left:2360px;top:607px;width:6px;height:2px;background:#0a0a0a;"></div>
<div style="left:2499.50px;top:591.40px;width:38.00px;height:31px;line-height:31px;font-family:'Liberation Serif', serif;font-size:24px;color:#000;white-space:nowrap;transform:scaleX(0.9550);transform-origin:right;">162</div>
<div style="left:1192px;top:635px;width:6px;height:2px;background:#0a0a0a;"></div>
<div style="left:1338px;top:635px;width:6px;height:2px;background:#0a0a0a;"></div>
<div style="left:1484px;top:635px;width:6px;height:2px;background:#0a0a0a;"></div>
<div style="left:1630px;top:635px;width:6px;height:2px;background:#0a0a0a;"></div>
<div style="left:1776px;top:635px;width:6px;height:2px;background:#0a0a0a;"></div>
<div style="left:1922px;top:635px;width:6px;height:2px;background:#0a0a0a;"></div>
<div style="left:2043.50px;top:619.40px;width:56.00px;height:31px;line-height:31px;font-family:'Liberation Serif', serif;font-size:24px;color:#000;white-space:nowrap;transform:scaleX(0.9550);transform-origin:right;">2,295</div>
<div style="left:2214px;top:635px;width:6px;height:2px;background:#0a0a0a;"></div>
<div style="left:2360px;top:635px;width:6px;height:2px;background:#0a0a0a;"></div>
<div style="left:2506px;top:635px;width:6px;height:2px;background:#0a0a0a;"></div>
<div style="left:1192px;top:750px;width:6px;height:2px;background:#0a0a0a;"></div>
<div style="left:1338px;top:750px;width:6px;height:2px;background:#0a0a0a;"></div>
<div style="left:1484px;top:750px;width:6px;height:2px;background:#0a0a0a;"></div>
<div style="left:1630px;top:750px;width:6px;height:2px;background:#0a0a0a;"></div>
<div style="left:1776px;top:750px;width:6px;height:2px;background:#0a0a0a;"></div>
<div style="left:1922px;top:750px;width:6px;height:2px;background:#0a0a0a;"></div>
<div style="left:2068px;top:750px;width:6px;height:2px;background:#0a0a0a;"></div>
<div style="left:2214px;top:750px;width:6px;height:2px;background:#0a0a0a;"></div>
<div style="left:2360px;top:750px;width:6px;height:2px;background:#0a0a0a;"></div>
<div style="left:2506px;top:750px;width:6px;height:2px;background:#0a0a0a;"></div>
<div style="left:1192px;top:778px;width:6px;height:2px;background:#0a0a0a;"></div>
<div style="left:1338px;top:778px;width:6px;height:2px;background:#0a0a0a;"></div>
<div style="left:1484px;top:778px;width:6px;height:2px;background:#0a0a0a;"></div>
<div style="left:1630px;top:778px;width:6px;height:2px;background:#0a0a0a;"></div>
<div style="left:1776px;top:778px;width:6px;height:2px;background:#0a0a0a;"></div>
<div style="left:1922px;top:778px;width:6px;height:2px;background:#0a0a0a;"></div>
<div style="left:2068px;top:778px;width:6px;height:2px;background:#0a0a0a;"></div>
<div style="left:2214px;top:778px;width:6px;height:2px;background:#0a0a0a;"></div>
<div style="left:2360px;top:778px;width:6px;height:2px;background:#0a0a0a;"></div>
<div style="left:2506px;top:778px;width:6px;height:2px;background:#0a0a0a;"></div>
<div style="left:1192px;top:806px;width:6px;height:2px;background:#0a0a0a;"></div>
<div style="left:1338px;top:806px;width:6px;height:2px;background:#0a0a0a;"></div>
<div style="left:1484px;top:806px;width:6px;height:2px;background:#0a0a0a;"></div>
<div style="left:1630px;top:806px;width:6px;height:2px;background:#0a0a0a;"></div>
<div style="left:1776px;top:806px;width:6px;height:2px;background:#0a0a0a;"></div>
<div style="left:1922px;top:806px;width:6px;height:2px;background:#0a0a0a;"></div>
<div style="left:2068px;top:806px;width:6px;height:2px;background:#0a0a0a;"></div>
<div style="left:2214px;top:806px;width:6px;height:2px;background:#0a0a0a;"></div>
<div style="left:2360px;top:806px;width:6px;height:2px;background:#0a0a0a;"></div>
<div style="left:2506px;top:806px;width:6px;height:2px;background:#0a0a0a;"></div>
<div style="left:1192px;top:834px;width:6px;height:2px;background:#0a0a0a;"></div>
<div style="left:1338px;top:834px;width:6px;height:2px;background:#0a0a0a;"></div>
<div style="left:1484px;top:834px;width:6px;height:2px;background:#0a0a0a;"></div>
<div style="left:1630px;top:834px;width:6px;height:2px;background:#0a0a0a;"></div>
<div style="left:1776px;top:834px;width:6px;height:2px;background:#0a0a0a;"></div>
<div style="left:1922px;top:834px;width:6px;height:2px;background:#0a0a0a;"></div>
<div style="left:2068px;top:834px;width:6px;height:2px;background:#0a0a0a;"></div>
<div style="left:2214px;top:834px;width:6px;height:2px;background:#0a0a0a;"></div>
<div style="left:2360px;top:834px;width:6px;height:2px;background:#0a0a0a;"></div>
<div style="left:2506px;top:834px;width:6px;height:2px;background:#0a0a0a;"></div>
<div style="left:1192px;top:862px;width:6px;height:2px;background:#0a0a0a;"></div>
<div style="left:1338px;top:862px;width:6px;height:2px;background:#0a0a0a;"></div>
<div style="left:1484px;top:862px;width:6px;height:2px;background:#0a0a0a;"></div>
<div style="left:1630px;top:862px;width:6px;height:2px;background:#0a0a0a;"></div>
<div style="left:1776px;top:862px;width:6px;height:2px;background:#0a0a0a;"></div>
<div style="left:1922px;top:862px;width:6px;height:2px;background:#0a0a0a;"></div>
<div style="left:2068px;top:862px;width:6px;height:2px;background:#0a0a0a;"></div>
<div style="left:2214px;top:862px;width:6px;height:2px;background:#0a0a0a;"></div>
<div style="left:2360px;top:862px;width:6px;height:2px;background:#0a0a0a;"></div>
<div style="left:2506px;top:862px;width:6px;height:2px;background:#0a0a0a;"></div>
<div style="left:1192px;top:890px;width:6px;height:2px;background:#0a0a0a;"></div>
<div style="left:1338px;top:890px;width:6px;height:2px;background:#0a0a0a;"></div>
<div style="left:1484px;top:890px;width:6px;height:2px;background:#0a0a0a;"></div>
<div style="left:1630px;top:890px;width:6px;height:2px;background:#0a0a0a;"></div>
<div style="left:1776px;top:890px;width:6px;height:2px;background:#0a0a0a;"></div>
<div style="left:1922px;top:890px;width:6px;height:2px;background:#0a0a0a;"></div>
<div style="left:2068px;top:890px;width:6px;height:2px;background:#0a0a0a;"></div>
<div style="left:2214px;top:890px;width:6px;height:2px;background:#0a0a0a;"></div>
<div style="left:2360px;top:890px;width:6px;height:2px;background:#0a0a0a;"></div>
<div style="left:2506px;top:890px;width:6px;height:2px;background:#0a0a0a;"></div>
<div style="left:1192px;top:918px;width:6px;height:2px;background:#0a0a0a;"></div>
<div style="left:1338px;top:918px;width:6px;height:2px;background:#0a0a0a;"></div>
<div style="left:1484px;top:918px;width:6px;height:2px;background:#0a0a0a;"></div>
<div style="left:1630px;top:918px;width:6px;height:2px;background:#0a0a0a;"></div>
<div style="left:1776px;top:918px;width:6px;height:2px;background:#0a0a0a;"></div>
<div style="left:1922px;top:918px;width:6px;height:2px;background:#0a0a0a;"></div>
<div style="left:2068px;top:918px;width:6px;height:2px;background:#0a0a0a;"></div>
<div style="left:2214px;top:918px;width:6px;height:2px;background:#0a0a0a;"></div>
<div style="left:2360px;top:918px;width:6px;height:2px;background:#0a0a0a;"></div>
<div style="left:2506px;top:918px;width:6px;height:2px;background:#0a0a0a;"></div>
<div style="left:1192px;top:974px;width:6px;height:2px;background:#0a0a0a;"></div>
<div style="left:1338px;top:974px;width:6px;height:2px;background:#0a0a0a;"></div>
<div style="left:1477.50px;top:958.40px;width:38.00px;height:31px;line-height:31px;font-family:'Liberation Serif', serif;font-size:24px;color:#000;white-space:nowrap;transform:scaleX(0.9550);transform-origin:right;">108</div>
<div style="left:1623.50px;top:958.40px;width:38.00px;height:31px;line-height:31px;font-family:'Liberation Serif', serif;font-size:24px;color:#000;white-space:nowrap;transform:scaleX(0.9550);transform-origin:right;">108</div>
<div style="left:1769.50px;top:958.40px;width:38.00px;height:31px;line-height:31px;font-family:'Liberation Serif', serif;font-size:24px;color:#000;white-space:nowrap;transform:scaleX(0.9550);transform-origin:right;">540</div>
<div style="left:1915.50px;top:958.40px;width:38.00px;height:31px;line-height:31px;font-family:'Liberation Serif', serif;font-size:24px;color:#000;white-space:nowrap;transform:scaleX(0.9550);transform-origin:right;">540</div>
<div style="left:2061.50px;top:958.40px;width:38.00px;height:31px;line-height:31px;font-family:'Liberation Serif', serif;font-size:24px;color:#000;white-space:nowrap;transform:scaleX(0.9550);transform-origin:right;">108</div>
<div style="left:2207.50px;top:958.40px;width:38.00px;height:31px;line-height:31px;font-family:'Liberation Serif', serif;font-size:24px;color:#000;white-space:nowrap;transform:scaleX(0.9550);transform-origin:right;">108</div>
<div style="left:2353.50px;top:958.40px;width:38.00px;height:31px;line-height:31px;font-family:'Liberation Serif', serif;font-size:24px;color:#000;white-space:nowrap;transform:scaleX(0.9550);transform-origin:right;">540</div>
<div style="left:2499.50px;top:958.40px;width:38.00px;height:31px;line-height:31px;font-family:'Liberation Serif', serif;font-size:24px;color:#000;white-space:nowrap;transform:scaleX(0.9550);transform-origin:right;">540</div>
<div style="left:1192px;top:1002px;width:6px;height:2px;background:#0a0a0a;"></div>
<div style="left:1338px;top:1002px;width:6px;height:2px;background:#0a0a0a;"></div>
<div style="left:1489.50px;top:986.40px;width:26.00px;height:31px;line-height:31px;font-family:'Liberation Serif', serif;font-size:24px;color:#000;white-space:nowrap;transform:scaleX(0.9550);transform-origin:right;">65</div>
<div style="left:1635.50px;top:986.40px;width:26.00px;height:31px;line-height:31px;font-family:'Liberation Serif', serif;font-size:24px;color:#000;white-space:nowrap;transform:scaleX(0.9550);transform-origin:right;">65</div>
<div style="left:1769.50px;top:986.40px;width:38.00px;height:31px;line-height:31px;font-family:'Liberation Serif', serif;font-size:24px;color:#000;white-space:nowrap;transform:scaleX(0.9550);transform-origin:right;">324</div>
<div style="left:1915.50px;top:986.40px;width:38.00px;height:31px;line-height:31px;font-family:'Liberation Serif', serif;font-size:24px;color:#000;white-space:nowrap;transform:scaleX(0.9550);transform-origin:right;">324</div>
<div style="left:2073.50px;top:986.40px;width:26.00px;height:31px;line-height:31px;font-family:'Liberation Serif', serif;font-size:24px;color:#000;white-space:nowrap;transform:scaleX(0.9550);transform-origin:right;">65</div>
<div style="left:2219.50px;top:986.40px;width:26.00px;height:31px;line-height:31px;font-family:'Liberation Serif', serif;font-size:24px;color:#000;white-space:nowrap;transform:scaleX(0.9550);transform-origin:right;">65</div>
<div style="left:2353.50px;top:986.40px;width:38.00px;height:31px;line-height:31px;font-family:'Liberation Serif', serif;font-size:24px;color:#000;white-space:nowrap;transform:scaleX(0.9550);transform-origin:right;">324</div>
<div style="left:2499.50px;top:986.40px;width:38.00px;height:31px;line-height:31px;font-family:'Liberation Serif', serif;font-size:24px;color:#000;white-space:nowrap;transform:scaleX(0.9550);transform-origin:right;">324</div>
<div style="left:1192px;top:1030px;width:6px;height:2px;background:#0a0a0a;"></div>
<div style="left:1338px;top:1030px;width:6px;height:2px;background:#0a0a0a;"></div>
<div style="left:1459.50px;top:1014.40px;width:56.00px;height:31px;line-height:31px;font-family:'Liberation Serif', serif;font-size:24px;color:#000;white-space:nowrap;transform:scaleX(0.9550);transform-origin:right;">1,950</div>
<div style="left:1605.50px;top:1014.40px;width:56.00px;height:31px;line-height:31px;font-family:'Liberation Serif', serif;font-size:24px;color:#000;white-space:nowrap;transform:scaleX(0.9550);transform-origin:right;">1,950</div>
<div style="left:1751.50px;top:1014.40px;width:56.00px;height:31px;line-height:31px;font-family:'Liberation Serif', serif;font-size:24px;color:#000;white-space:nowrap;transform:scaleX(0.9550);transform-origin:right;">1,950</div>
<div style="left:1897.50px;top:1014.40px;width:56.00px;height:31px;line-height:31px;font-family:'Liberation Serif', serif;font-size:24px;color:#000;white-space:nowrap;transform:scaleX(0.9550);transform-origin:right;">5,850</div>
<div style="left:2043.50px;top:1014.40px;width:56.00px;height:31px;line-height:31px;font-family:'Liberation Serif', serif;font-size:24px;color:#000;white-space:nowrap;transform:scaleX(0.9550);transform-origin:right;">1,950</div>
<div style="left:2189.50px;top:1014.40px;width:56.00px;height:31px;line-height:31px;font-family:'Liberation Serif', serif;font-size:24px;color:#000;white-space:nowrap;transform:scaleX(0.9550);transform-origin:right;">1,950</div>
<div style="left:2335.50px;top:1014.40px;width:56.00px;height:31px;line-height:31px;font-family:'Liberation Serif', serif;font-size:24px;color:#000;white-space:nowrap;transform:scaleX(0.9550);transform-origin:right;">1,950</div>
<div style="left:2481.50px;top:1014.40px;width:56.00px;height:31px;line-height:31px;font-family:'Liberation Serif', serif;font-size:24px;color:#000;white-space:nowrap;transform:scaleX(0.9550);transform-origin:right;">5,850</div>
<div style="left:1192px;top:1058px;width:6px;height:2px;background:#0a0a0a;"></div>
<div style="left:1338px;top:1058px;width:6px;height:2px;background:#0a0a0a;"></div>
<div style="left:1459.50px;top:1042.40px;width:56.00px;height:31px;line-height:31px;font-family:'Liberation Serif', serif;font-size:24px;color:#000;white-space:nowrap;transform:scaleX(0.9550);transform-origin:right;">2,700</div>
<div style="left:1630px;top:1058px;width:6px;height:2px;background:#0a0a0a;"></div>
<div style="left:1776px;top:1058px;width:6px;height:2px;background:#0a0a0a;"></div>
<div style="left:1922px;top:1058px;width:6px;height:2px;background:#0a0a0a;"></div>
<div style="left:2043.50px;top:1042.40px;width:56.00px;height:31px;line-height:31px;font-family:'Liberation Serif', serif;font-size:24px;color:#000;white-space:nowrap;transform:scaleX(0.9550);transform-origin:right;">2,700</div>
<div style="left:2214px;top:1058px;width:6px;height:2px;background:#0a0a0a;"></div>
<div style="left:2360px;top:1058px;width:6px;height:2px;background:#0a0a0a;"></div>
<div style="left:2506px;top:1058px;width:6px;height:2px;background:#0a0a0a;"></div>
<div style="left:1192px;top:1086px;width:6px;height:2px;background:#0a0a0a;"></div>
<div style="left:1338px;top:1086px;width:6px;height:2px;background:#0a0a0a;"></div>
<div style="left:1484px;top:1086px;width:6px;height:2px;background:#0a0a0a;"></div>
<div style="left:1630px;top:1086px;width:6px;height:2px;background:#0a0a0a;"></div>
<div style="left:1776px;top:1086px;width:6px;height:2px;background:#0a0a0a;"></div>
<div style="left:1922px;top:1086px;width:6px;height:2px;background:#0a0a0a;"></div>
<div style="left:2068px;top:1086px;width:6px;height:2px;background:#0a0a0a;"></div>
<div style="left:2214px;top:1086px;width:6px;height:2px;background:#0a0a0a;"></div>
<div style="left:2360px;top:1086px;width:6px;height:2px;background:#0a0a0a;"></div>
<div style="left:2506px;top:1086px;width:6px;height:2px;background:#0a0a0a;"></div>
<div style="left:1192px;top:1114px;width:6px;height:2px;background:#0a0a0a;"></div>
<div style="left:1338px;top:1114px;width:6px;height:2px;background:#0a0a0a;"></div>
<div style="left:1484px;top:1114px;width:6px;height:2px;background:#0a0a0a;"></div>
<div style="left:1630px;top:1114px;width:6px;height:2px;background:#0a0a0a;"></div>
<div style="left:1776px;top:1114px;width:6px;height:2px;background:#0a0a0a;"></div>
<div style="left:1915.50px;top:1098.40px;width:38.00px;height:31px;line-height:31px;font-family:'Liberation Serif', serif;font-size:24px;color:#000;white-space:nowrap;transform:scaleX(0.9550);transform-origin:right;">243</div>
<div style="left:2068px;top:1114px;width:6px;height:2px;background:#0a0a0a;"></div>
<div style="left:2214px;top:1114px;width:6px;height:2px;background:#0a0a0a;"></div>
<div style="left:2360px;top:1114px;width:6px;height:2px;background:#0a0a0a;"></div>
<div style="left:2499.50px;top:1098.40px;width:38.00px;height:31px;line-height:31px;font-family:'Liberation Serif', serif;font-size:24px;color:#000;white-space:nowrap;transform:scaleX(0.9550);transform-origin:right;">243</div>
<div style="left:1192px;top:1142px;width:6px;height:2px;background:#0a0a0a;"></div>
<div style="left:1338px;top:1142px;width:6px;height:2px;background:#0a0a0a;"></div>
<div style="left:1484px;top:1142px;width:6px;height:2px;background:#0a0a0a;"></div>
<div style="left:1630px;top:1142px;width:6px;height:2px;background:#0a0a0a;"></div>
<div style="left:1776px;top:1142px;width:6px;height:2px;background:#0a0a0a;"></div>
<div style="left:1915.50px;top:1126.40px;width:38.00px;height:31px;line-height:31px;font-family:'Liberation Serif', serif;font-size:24px;color:#000;white-space:nowrap;transform:scaleX(0.9550);transform-origin:right;">324</div>
<div style="left:2068px;top:1142px;width:6px;height:2px;background:#0a0a0a;"></div>
<div style="left:2214px;top:1142px;width:6px;height:2px;background:#0a0a0a;"></div>
<div style="left:2360px;top:1142px;width:6px;height:2px;background:#0a0a0a;"></div>
<div style="left:2499.50px;top:1126.40px;width:38.00px;height:31px;line-height:31px;font-family:'Liberation Serif', serif;font-size:24px;color:#000;white-space:nowrap;transform:scaleX(0.9550);transform-origin:right;">324</div>
<div style="left:1218.00px;top:88.40px;width:14.00px;height:31px;line-height:31px;font-family:'Liberation Serif', serif;font-size:24px;color:#000;white-space:nowrap;">1</div>
<div style="left:1364.00px;top:88.40px;width:14.00px;height:31px;line-height:31px;font-family:'Liberation Serif', serif;font-size:24px;color:#000;white-space:nowrap;">2</div>
<div style="left:1510.00px;top:88.40px;width:14.00px;height:31px;line-height:31px;font-family:'Liberation Serif', serif;font-size:24px;color:#000;white-space:nowrap;">3</div>
<div style="left:1656.00px;top:88.40px;width:14.00px;height:31px;line-height:31px;font-family:'Liberation Serif', serif;font-size:24px;color:#000;white-space:nowrap;">4</div>
<div style="left:1802.00px;top:88.40px;width:14.00px;height:31px;line-height:31px;font-family:'Liberation Serif', serif;font-size:24px;color:#000;white-space:nowrap;">5</div>
<div style="left:1948.00px;top:88.40px;width:14.00px;height:31px;line-height:31px;font-family:'Liberation Serif', serif;font-size:24px;color:#000;white-space:nowrap;">6</div>
<div style="left:2094.00px;top:88.40px;width:14.00px;height:31px;line-height:31px;font-family:'Liberation Serif', serif;font-size:24px;color:#000;white-space:nowrap;">7</div>
<div style="left:2240.00px;top:88.40px;width:14.00px;height:31px;line-height:31px;font-family:'Liberation Serif', serif;font-size:24px;color:#000;white-space:nowrap;">8</div>
<div style="left:2386.00px;top:88.40px;width:14.00px;height:31px;line-height:31px;font-family:'Liberation Serif', serif;font-size:24px;color:#000;white-space:nowrap;">9</div>
<div style="left:2520.00px;top:88.40px;width:26.00px;height:31px;line-height:31px;font-family:'Liberation Serif', serif;font-size:24px;color:#000;white-space:nowrap;">10</div>
<div style="left:1143.83px;top:115.40px;width:71.34px;height:31px;line-height:31px;font-family:'Liberation Serif', serif;font-size:24px;font-weight:bold;color:#000;white-space:nowrap;transform:scaleX(0.9300);transform-origin:center;">Jan-23</div>
<div style="left:1272.17px;top:115.40px;width:72.66px;height:31px;line-height:31px;font-family:'Liberation Serif', serif;font-size:24px;font-weight:bold;color:#000;white-space:nowrap;transform:scaleX(0.9300);transform-origin:center;">Feb-23</div>
<div style="left:1415.29px;top:115.40px;width:78.42px;height:31px;line-height:31px;font-family:'Liberation Serif', serif;font-size:24px;font-weight:bold;color:#000;white-space:nowrap;transform:scaleX(0.9300);transform-origin:center;">Mar-23</div>
<div style="left:1563.28px;top:115.40px;width:74.44px;height:31px;line-height:31px;font-family:'Liberation Serif', serif;font-size:24px;font-weight:bold;color:#000;white-space:nowrap;transform:scaleX(0.9300);transform-origin:center;">Apr-23</div>
<div style="left:1706.17px;top:115.40px;width:80.66px;height:31px;line-height:31px;font-family:'Liberation Serif', serif;font-size:24px;font-weight:bold;color:#000;white-space:nowrap;transform:scaleX(0.9300);transform-origin:center;">May-23</div>
<div style="left:1856.16px;top:115.40px;width:72.69px;height:31px;line-height:31px;font-family:'Liberation Serif', serif;font-size:24px;font-weight:bold;color:#000;white-space:nowrap;transform:scaleX(0.9300);transform-origin:center;">Jun-23</div>
<div style="left:2005.49px;top:115.40px;width:66.02px;height:31px;line-height:31px;font-family:'Liberation Serif', serif;font-size:24px;font-weight:bold;color:#000;white-space:nowrap;transform:scaleX(0.9300);transform-origin:center;">Jul-23</div>
<div style="left:2146.16px;top:115.40px;width:76.67px;height:31px;line-height:31px;font-family:'Liberation Serif', serif;font-size:24px;font-weight:bold;color:#000;white-space:nowrap;transform:scaleX(0.9300);transform-origin:center;">Aug-23</div>
<div style="left:2294.83px;top:115.40px;width:71.34px;height:31px;line-height:31px;font-family:'Liberation Serif', serif;font-size:24px;font-weight:bold;color:#000;white-space:nowrap;transform:scaleX(0.9300);transform-origin:center;">Sep-23</div>
<div style="left:2440.84px;top:115.40px;width:71.33px;height:31px;line-height:31px;font-family:'Liberation Serif', serif;font-size:24px;font-weight:bold;color:#000;white-space:nowrap;transform:scaleX(0.9300);transform-origin:center;">Oct-23</div>
<div style="left:208px;top:172px;width:0;height:0;border-top:8px solid #1B8A1B;border-right:8px solid transparent;"></div>
<div style="left:208px;top:480px;width:0;height:0;border-top:8px solid #1B8A1B;border-right:8px solid transparent;"></div>
<div style="left:1123px;top:141.5px;width:112px;height:1.5px;background:#3C8A5E"></div>
<svg style="left:39px;top:143px;" width="168" height="112"><g fill="none"><line x1="15" y1="15" x2="154" y2="15" stroke="#8E99AB" stroke-width="2"/><line x1="15" y1="43" x2="154" y2="43" stroke="#8E99AB" stroke-width="2"/><line x1="15" y1="71" x2="154" y2="71" stroke="#8E99AB" stroke-width="2"/><polyline points="15,109 38,91 59,89.3 154,89.3" stroke="#5A6E8C" stroke-width="1.2"/></g></svg>
<div style="left:40px;top:88px;width:135px;height:49px;border:3px solid #1D6B41;background:#fff"></div>
<div style="left:79.30px;top:104.88px;width:67.41px;height:29px;line-height:29px;font-family:'Liberation Sans', sans-serif;font-size:22px;color:#1D6B41;white-space:nowrap;transform:scaleX(1.0549);transform-origin:center;">&lt; Start</div>
<div style="left:0px;top:59px;width:2530px;height:28px;background:#EFEFEF;"></div>
<div style="left:0px;top:87px;width:39px;height:1062px;background:#EFEFEF;"></div>
<div style="left:16px;top:64px;width:0;height:0;border-bottom:20px solid #D6D6D6;border-left:20px solid transparent;"></div>
<div style="left:1123px;top:59px;width:111px;height:27px;background:#E0E0E1;"></div>
<div style="left:1123px;top:86px;width:111px;height:2px;background:#1D6B41;"></div>
<div style="left:207px;top:64px;width:1px;height:23px;background:#D8D8D8;"></div>
<div style="left:783px;top:64px;width:1px;height:23px;background:#D8D8D8;"></div>
<div style="left:1028px;top:64px;width:1px;height:23px;background:#D8D8D8;"></div>
<div style="left:1122px;top:64px;width:1px;height:23px;background:#D8D8D8;"></div>
<div style="left:1234px;top:64px;width:1px;height:23px;background:#D8D8D8;"></div>
<div style="left:1380px;top:64px;width:1px;height:23px;background:#D8D8D8;"></div>
<div style="left:1526px;top:64px;width:1px;height:23px;background:#D8D8D8;"></div>
<div style="left:1672px;top:64px;width:1px;height:23px;background:#D8D8D8;"></div>
<div style="left:1818px;top:64px;width:1px;height:23px;background:#D8D8D8;"></div>
<div style="left:1964px;top:64px;width:1px;height:23px;background:#D8D8D8;"></div>
<div style="left:2110px;top:64px;width:1px;height:23px;background:#D8D8D8;"></div>
<div style="left:2256px;top:64px;width:1px;height:23px;background:#D8D8D8;"></div>
<div style="left:2402px;top:64px;width:1px;height:23px;background:#D8D8D8;"></div>
<div style="left:0px;top:87px;width:2530px;height:1px;background:#BDBDBD;"></div>
<div style="left:116.50px;top:62.74px;width:15.00px;height:25px;line-height:25px;font-family:'Liberation Sans', sans-serif;font-size:19.5px;color:#444444;white-space:nowrap;">A</div>
<div style="left:488.50px;top:62.74px;width:15.00px;height:25px;line-height:25px;font-family:'Liberation Sans', sans-serif;font-size:19.5px;color:#444444;white-space:nowrap;">B</div>
<div style="left:898.46px;top:62.74px;width:16.08px;height:25px;line-height:25px;font-family:'Liberation Sans', sans-serif;font-size:19.5px;color:#444444;white-space:nowrap;">C</div>
<div style="left:1067.96px;top:62.74px;width:16.08px;height:25px;line-height:25px;font-family:'Liberation Sans', sans-serif;font-size:19.5px;color:#444444;white-space:nowrap;">D</div>
<div style="left:1171.50px;top:62.74px;width:15.00px;height:25px;line-height:25px;font-family:'Liberation Sans', sans-serif;font-size:19.5px;color:#1D6B41;white-space:nowrap;">E</div>
<div style="left:1301.05px;top:62.74px;width:13.91px;height:25px;line-height:25px;font-family:'Liberation Sans', sans-serif;font-size:19.5px;color:#444444;white-space:nowrap;">F</div>
<div style="left:1445.41px;top:62.74px;width:17.17px;height:25px;line-height:25px;font-family:'Liberation Sans', sans-serif;font-size:19.5px;color:#444444;white-space:nowrap;">G</div>
<div style="left:1591.96px;top:62.74px;width:16.08px;height:25px;line-height:25px;font-family:'Liberation Sans', sans-serif;font-size:19.5px;color:#444444;white-space:nowrap;">H</div>
<div style="left:1742.29px;top:62.74px;width:7.42px;height:25px;line-height:25px;font-family:'Liberation Sans', sans-serif;font-size:19.5px;color:#444444;white-space:nowrap;">I</div>
<div style="left:1886.12px;top:62.74px;width:11.75px;height:25px;line-height:25px;font-family:'Liberation Sans', sans-serif;font-size:19.5px;color:#444444;white-space:nowrap;">J</div>
<div style="left:2030.50px;top:62.74px;width:15.00px;height:25px;line-height:25px;font-family:'Liberation Sans', sans-serif;font-size:19.5px;color:#444444;white-space:nowrap;">K</div>
<div style="left:2177.58px;top:62.74px;width:12.84px;height:25px;line-height:25px;font-family:'Liberation Sans', sans-serif;font-size:19.5px;color:#444444;white-space:nowrap;">L</div>
<div style="left:2320.88px;top:62.74px;width:18.25px;height:25px;line-height:25px;font-family:'Liberation Sans', sans-serif;font-size:19.5px;color:#444444;white-space:nowrap;">M</div>
<div style="left:2467.96px;top:62.74px;width:16.08px;height:25px;line-height:25px;font-family:'Liberation Sans', sans-serif;font-size:19.5px;color:#444444;white-space:nowrap;">N</div>
<div style="left:8px;top:113px;width:31px;height:1px;background:#E0E0E0;"></div>
<div style="left:8px;top:117px;width:31px;height:1px;background:#E0E0E0;"></div>
<div style="left:13.94px;top:90.07px;width:13.12px;height:26px;line-height:26px;font-family:'Liberation Sans', sans-serif;font-size:20px;color:#444444;white-space:nowrap;">1</div>
<div style="left:13.94px;top:118.07px;width:13.12px;height:26px;line-height:26px;font-family:'Liberation Sans', sans-serif;font-size:20px;color:#444444;white-space:nowrap;">3</div>
<div style="left:8px;top:171px;width:31px;height:1px;background:#DCDCDC;"></div>
<div style="left:8.38px;top:146.07px;width:24.25px;height:26px;line-height:26px;font-family:'Liberation Sans', sans-serif;font-size:20px;color:#444444;white-space:nowrap;">39</div>
<div style="left:8px;top:199px;width:31px;height:1px;background:#DCDCDC;"></div>
<div style="left:8.38px;top:174.07px;width:24.25px;height:26px;line-height:26px;font-family:'Liberation Sans', sans-serif;font-size:20px;color:#444444;white-space:nowrap;">40</div>
<div style="left:8px;top:227px;width:31px;height:1px;background:#DCDCDC;"></div>
<div style="left:8.38px;top:202.07px;width:24.25px;height:26px;line-height:26px;font-family:'Liberation Sans', sans-serif;font-size:20px;color:#444444;white-space:nowrap;">41</div>
<div style="left:8px;top:255px;width:31px;height:1px;background:#DCDCDC;"></div>
<div style="left:8.38px;top:230.07px;width:24.25px;height:26px;line-height:26px;font-family:'Liberation Sans', sans-serif;font-size:20px;color:#444444;white-space:nowrap;">42</div>
<div style="left:8px;top:283px;width:31px;height:1px;background:#DCDCDC;"></div>
<div style="left:8.38px;top:258.07px;width:24.25px;height:26px;line-height:26px;font-family:'Liberation Sans', sans-serif;font-size:20px;color:#444444;white-space:nowrap;">43</div>
<div style="left:8px;top:311px;width:31px;height:1px;background:#DCDCDC;"></div>
<div style="left:8.38px;top:286.07px;width:24.25px;height:26px;line-height:26px;font-family:'Liberation Sans', sans-serif;font-size:20px;color:#444444;white-space:nowrap;">44</div>
<div style="left:8px;top:339px;width:31px;height:1px;background:#DCDCDC;"></div>
<div style="left:8.38px;top:314.07px;width:24.25px;height:26px;line-height:26px;font-family:'Liberation Sans', sans-serif;font-size:20px;color:#444444;white-space:nowrap;">45</div>
<div style="left:8px;top:367px;width:31px;height:1px;background:#DCDCDC;"></div>
<div style="left:8.38px;top:342.07px;width:24.25px;height:26px;line-height:26px;font-family:'Liberation Sans', sans-serif;font-size:20px;color:#444444;white-space:nowrap;">46</div>
<div style="left:8px;top:395px;width:31px;height:1px;background:#DCDCDC;"></div>
<div style="left:8.38px;top:370.07px;width:24.25px;height:26px;line-height:26px;font-family:'Liberation Sans', sans-serif;font-size:20px;color:#444444;white-space:nowrap;">47</div>
<div style="left:8px;top:423px;width:31px;height:1px;background:#DCDCDC;"></div>
<div style="left:8.38px;top:398.07px;width:24.25px;height:26px;line-height:26px;font-family:'Liberation Sans', sans-serif;font-size:20px;color:#444444;white-space:nowrap;">48</div>
<div style="left:8px;top:451px;width:31px;height:1px;background:#DCDCDC;"></div>
<div style="left:8.38px;top:426.07px;width:24.25px;height:26px;line-height:26px;font-family:'Liberation Sans', sans-serif;font-size:20px;color:#444444;white-space:nowrap;">49</div>
<div style="left:8px;top:479px;width:31px;height:1px;background:#DCDCDC;"></div>
<div style="left:8.38px;top:454.07px;width:24.25px;height:26px;line-height:26px;font-family:'Liberation Sans', sans-serif;font-size:20px;color:#444444;white-space:nowrap;">50</div>
<div style="left:8px;top:507px;width:31px;height:1px;background:#DCDCDC;"></div>
<div style="left:8.38px;top:482.07px;width:24.25px;height:26px;line-height:26px;font-family:'Liberation Sans', sans-serif;font-size:20px;color:#444444;white-space:nowrap;">51</div>
<div style="left:8px;top:535px;width:31px;height:1px;background:#DCDCDC;"></div>
<div style="left:8.38px;top:510.07px;width:24.25px;height:26px;line-height:26px;font-family:'Liberation Sans', sans-serif;font-size:20px;color:#444444;white-space:nowrap;">52</div>
<div style="left:8px;top:563px;width:31px;height:1px;background:#DCDCDC;"></div>
<div style="left:8.38px;top:538.07px;width:24.25px;height:26px;line-height:26px;font-family:'Liberation Sans', sans-serif;font-size:20px;color:#444444;white-space:nowrap;">53</div>
<div style="left:8px;top:591px;width:31px;height:1px;background:#DCDCDC;"></div>
<div style="left:8.38px;top:566.07px;width:24.25px;height:26px;line-height:26px;font-family:'Liberation Sans', sans-serif;font-size:20px;color:#444444;white-space:nowrap;">54</div>
<div style="left:8px;top:619px;width:31px;height:1px;background:#DCDCDC;"></div>
<div style="left:8.38px;top:594.07px;width:24.25px;height:26px;line-height:26px;font-family:'Liberation Sans', sans-serif;font-size:20px;color:#444444;white-space:nowrap;">55</div>
<div style="left:8px;top:647px;width:31px;height:1px;background:#DCDCDC;"></div>
<div style="left:8.38px;top:622.07px;width:24.25px;height:26px;line-height:26px;font-family:'Liberation Sans', sans-serif;font-size:20px;color:#444444;white-space:nowrap;">56</div>
<div style="left:8px;top:676px;width:31px;height:1px;background:#DCDCDC;"></div>
<div style="left:8.38px;top:650.57px;width:24.25px;height:26px;line-height:26px;font-family:'Liberation Sans', sans-serif;font-size:20px;color:#444444;white-space:nowrap;">57</div>
<div style="left:8px;top:705px;width:31px;height:1px;background:#DCDCDC;"></div>
<div style="left:8.38px;top:679.57px;width:24.25px;height:26px;line-height:26px;font-family:'Liberation Sans', sans-serif;font-size:20px;color:#444444;white-space:nowrap;">58</div>
<div style="left:8px;top:734px;width:31px;height:1px;background:#DCDCDC;"></div>
<div style="left:8.38px;top:708.57px;width:24.25px;height:26px;line-height:26px;font-family:'Liberation Sans', sans-serif;font-size:20px;color:#444444;white-space:nowrap;">59</div>
<div style="left:8px;top:762px;width:31px;height:1px;background:#DCDCDC;"></div>
<div style="left:8.38px;top:737.07px;width:24.25px;height:26px;line-height:26px;font-family:'Liberation Sans', sans-serif;font-size:20px;color:#444444;white-space:nowrap;">60</div>
<div style="left:8px;top:790px;width:31px;height:1px;background:#DCDCDC;"></div>
<div style="left:8.38px;top:765.07px;width:24.25px;height:26px;line-height:26px;font-family:'Liberation Sans', sans-serif;font-size:20px;color:#444444;white-space:nowrap;">61</div>
<div style="left:8px;top:818px;width:31px;height:1px;background:#DCDCDC;"></div>
<div style="left:8.38px;top:793.07px;width:24.25px;height:26px;line-height:26px;font-family:'Liberation Sans', sans-serif;font-size:20px;color:#444444;white-space:nowrap;">62</div>
<div style="left:8px;top:846px;width:31px;height:1px;background:#DCDCDC;"></div>
<div style="left:8.38px;top:821.07px;width:24.25px;height:26px;line-height:26px;font-family:'Liberation Sans', sans-serif;font-size:20px;color:#444444;white-space:nowrap;">63</div>
<div style="left:8px;top:874px;width:31px;height:1px;background:#DCDCDC;"></div>
<div style="left:8.38px;top:849.07px;width:24.25px;height:26px;line-height:26px;font-family:'Liberation Sans', sans-serif;font-size:20px;color:#444444;white-space:nowrap;">64</div>
<div style="left:8px;top:902px;width:31px;height:1px;background:#DCDCDC;"></div>
<div style="left:8.38px;top:877.07px;width:24.25px;height:26px;line-height:26px;font-family:'Liberation Sans', sans-serif;font-size:20px;color:#444444;white-space:nowrap;">65</div>
<div style="left:8px;top:930px;width:31px;height:1px;background:#DCDCDC;"></div>
<div style="left:8.38px;top:905.07px;width:24.25px;height:26px;line-height:26px;font-family:'Liberation Sans', sans-serif;font-size:20px;color:#444444;white-space:nowrap;">66</div>
<div style="left:8px;top:958px;width:31px;height:1px;background:#DCDCDC;"></div>
<div style="left:8.38px;top:933.07px;width:24.25px;height:26px;line-height:26px;font-family:'Liberation Sans', sans-serif;font-size:20px;color:#444444;white-space:nowrap;">67</div>
<div style="left:8px;top:986px;width:31px;height:1px;background:#DCDCDC;"></div>
<div style="left:8.38px;top:961.07px;width:24.25px;height:26px;line-height:26px;font-family:'Liberation Sans', sans-serif;font-size:20px;color:#444444;white-space:nowrap;">68</div>
<div style="left:8px;top:1014px;width:31px;height:1px;background:#DCDCDC;"></div>
<div style="left:8.38px;top:989.07px;width:24.25px;height:26px;line-height:26px;font-family:'Liberation Sans', sans-serif;font-size:20px;color:#444444;white-space:nowrap;">69</div>
<div style="left:8px;top:1042px;width:31px;height:1px;background:#DCDCDC;"></div>
<div style="left:8.38px;top:1017.07px;width:24.25px;height:26px;line-height:26px;font-family:'Liberation Sans', sans-serif;font-size:20px;color:#444444;white-space:nowrap;">70</div>
<div style="left:8px;top:1070px;width:31px;height:1px;background:#DCDCDC;"></div>
<div style="left:8.38px;top:1045.07px;width:24.25px;height:26px;line-height:26px;font-family:'Liberation Sans', sans-serif;font-size:20px;color:#444444;white-space:nowrap;">71</div>
<div style="left:8px;top:1098px;width:31px;height:1px;background:#DCDCDC;"></div>
<div style="left:8.38px;top:1073.07px;width:24.25px;height:26px;line-height:26px;font-family:'Liberation Sans', sans-serif;font-size:20px;color:#444444;white-space:nowrap;">72</div>
<div style="left:8px;top:1126px;width:31px;height:1px;background:#DCDCDC;"></div>
<div style="left:8.38px;top:1101.07px;width:24.25px;height:26px;line-height:26px;font-family:'Liberation Sans', sans-serif;font-size:20px;color:#444444;white-space:nowrap;">73</div>
<div style="left:8.38px;top:1129.07px;width:24.25px;height:26px;line-height:26px;font-family:'Liberation Sans', sans-serif;font-size:20px;color:#444444;white-space:nowrap;">74</div>
<div style="left:39px;top:59px;width:1px;height:1090px;background:#BDBDBD;"></div>
<div style="left:0px;top:143px;width:2530px;height:1px;background:#A6A6A6;"></div>
<div style="left:1122px;top:0px;width:1px;height:1149px;background:#9B9B9B;"></div>
<div style="left:6px;top:2px;width:25px;height:24px;border:1px solid #9A9A9A;background:#E6E6E6"></div>
<div style="left:15.94px;top:9.19px;width:8.12px;height:14px;line-height:14px;font-family:'Liberation Sans', sans-serif;font-size:11px;color:#444;white-space:nowrap;">1</div>
<div style="left:6px;top:30px;width:25px;height:24px;border:1px solid #9A9A9A;background:#E6E6E6"></div>
<div style="left:15.94px;top:37.19px;width:8.12px;height:14px;line-height:14px;font-family:'Liberation Sans', sans-serif;font-size:11px;color:#444;white-space:nowrap;">2</div>
<div style="left:1124px;top:12px;width:1404px;height:2px;background:#A8A8A8;"></div>
<div style="left:1124px;top:12px;width:2px;height:5px;background:#A8A8A8;"></div>
<div style="left:1177px;top:39px;width:2px;height:2px;background:#8A8A8A;"></div>
<div style="left:1306px;top:39px;width:2px;height:2px;background:#8A8A8A;"></div>
<div style="left:1452px;top:39px;width:2px;height:2px;background:#8A8A8A;"></div>
<div style="left:1598px;top:39px;width:2px;height:2px;background:#8A8A8A;"></div>
<div style="left:1744px;top:39px;width:2px;height:2px;background:#8A8A8A;"></div>
<div style="left:1890px;top:39px;width:2px;height:2px;background:#8A8A8A;"></div>
<div style="left:2036px;top:39px;width:2px;height:2px;background:#8A8A8A;"></div>
<div style="left:2182px;top:39px;width:2px;height:2px;background:#8A8A8A;"></div>
<div style="left:2328px;top:39px;width:2px;height:2px;background:#8A8A8A;"></div>
<div style="left:2474px;top:39px;width:2px;height:2px;background:#8A8A8A;"></div>
<div style="left:2530px;top:0px;width:30px;height:1149px;background:#F7F7F7;"></div>
<div style="left:2529px;top:59px;width:1px;height:1090px;background:#D0D0D0;"></div>
<div style="left:2538px;top:7px;width:0;height:0;border-left:7px solid transparent;border-right:7px solid transparent;border-bottom:10px solid #6E6E6E;"></div>
<div style="left:2538px;top:1132px;width:0;height:0;border-left:7px solid transparent;border-right:7px solid transparent;border-top:10px solid #6E6E6E;"></div>
<div style="left:2539px;top:183px;width:13px;height:160px;border-radius:7px;background:#6F6F6F"></div>
<div style="left:0px;top:1149px;width:2560px;height:34px;background:#F5F5F5;"></div>
<div style="left:0px;top:1149px;width:2530px;height:1px;background:#C8C8C8;"></div>
<div style="left:29px;top:1159px;width:0;height:0;border-top:6px solid transparent;border-bottom:6px solid transparent;border-right:7px solid #C4C4C4;"></div>
<div style="left:63px;top:1159px;width:0;height:0;border-top:6px solid transparent;border-bottom:6px solid transparent;border-left:7px solid #1D6B41;"></div>
<div style="left:417px;top:1149px;width:270px;height:31px;background:#FFFFFF;box-shadow: -1px 0 0 #C8C8C8, 1px 0 0 #C8C8C8;"></div>
<div style="left:417px;top:1178px;width:270px;height:2px;background:#1D6B41;"></div>
<div style="left:132.50px;top:1151.74px;width:43.19px;height:25px;line-height:25px;font-family:'Liberation Sans', sans-serif;font-size:19.5px;color:#4A4A4A;white-space:nowrap;">Start</div>
<div style="left:206.00px;top:1151.74px;width:69.20px;height:25px;line-height:25px;font-family:'Liberation Sans', sans-serif;font-size:19.5px;color:#4A4A4A;white-space:nowrap;transform:scaleX(0.9821);transform-origin:left;">1. Initial</div>
<div style="left:306.00px;top:1151.74px;width:96.30px;height:25px;line-height:25px;font-family:'Liberation Sans', sans-serif;font-size:19.5px;color:#4A4A4A;white-space:nowrap;">2. Growing</div>
<div style="left:704.00px;top:1151.74px;width:166.70px;height:25px;line-height:25px;font-family:'Liberation Sans', sans-serif;font-size:19.5px;color:#4A4A4A;white-space:nowrap;transform:scaleX(0.9593);transform-origin:left;">4. SG&amp;A &amp; CAPEX</div>
<div style="left:897.60px;top:1151.74px;width:111.48px;height:25px;line-height:25px;font-family:'Liberation Sans', sans-serif;font-size:19.5px;color:#4A4A4A;white-space:nowrap;transform:scaleX(0.9472);transform-origin:left;">5. Personnel</div>
<div style="left:1040.40px;top:1151.74px;width:181.95px;height:25px;line-height:25px;font-family:'Liberation Sans', sans-serif;font-size:19.5px;color:#4A4A4A;white-space:nowrap;transform:scaleX(0.9903);transform-origin:left;">6. Income Statement</div>
<div style="left:1264.40px;top:1151.74px;width:266.50px;height:25px;line-height:25px;font-family:'Liberation Sans', sans-serif;font-size:19.5px;color:#4A4A4A;white-space:nowrap;transform:scaleX(1.0102);transform-origin:left;">6.1 Income Statement monthly</div>
<div style="left:1574.50px;top:1151.74px;width:125.53px;height:25px;line-height:25px;font-family:'Liberation Sans', sans-serif;font-size:19.5px;color:#4A4A4A;white-space:nowrap;transform:scaleX(0.9253);transform-origin:left;">7. Cash Flows</div>
<div style="left:1728.00px;top:1151.74px;width:210.08px;height:25px;line-height:25px;font-family:'Liberation Sans', sans-serif;font-size:19.5px;color:#4A4A4A;white-space:nowrap;transform:scaleX(0.9804);transform-origin:left;">7.1 Cash Flows monthly</div>
<div style="left:430.00px;top:1151.74px;width:242.58px;height:25px;line-height:25px;font-family:'Liberation Sans', sans-serif;font-size:19.5px;font-weight:bold;color:#1D6B41;white-space:nowrap;transform:scaleX(1.0142);transform-origin:left;">3. Revenue &amp; Gross Profit</div>
<div style="left:118px;top:1153px;width:1px;height:26px;background:#B9B9B9;"></div>
<div style="left:188px;top:1153px;width:1px;height:26px;background:#B9B9B9;"></div>
<div style="left:290px;top:1153px;width:1px;height:26px;background:#B9B9B9;"></div>
<div style="left:880px;top:1153px;width:1px;height:26px;background:#B9B9B9;"></div>
<div style="left:1020px;top:1153px;width:1px;height:26px;background:#B9B9B9;"></div>
<div style="left:1240px;top:1153px;width:1px;height:26px;background:#B9B9B9;"></div>
<div style="left:1557px;top:1153px;width:1px;height:26px;background:#B9B9B9;"></div>
<div style="left:1707px;top:1153px;width:1px;height:26px;background:#B9B9B9;"></div>
<div style="left:1959px;top:1167px;width:3px;height:3px;background:#1E5E3A;"></div>
<div style="left:1965px;top:1167px;width:3px;height:3px;background:#1E5E3A;"></div>
<div style="left:1971px;top:1167px;width:3px;height:3px;background:#1E5E3A;"></div>
<svg style="left:1988px;top:1154px" width="24" height="24"><circle cx="12" cy="12" r="10.2" fill="none" stroke="#6E6E6E" stroke-width="1.5"/><line x1="7.3" y1="12" x2="16.7" y2="12" stroke="#6E6E6E" stroke-width="1.5"/><line x1="12" y1="7.3" x2="12" y2="16.7" stroke="#6E6E6E" stroke-width="1.5"/></svg>
<div style="left:2033px;top:1158px;width:3px;height:3px;background:#ABABAB;"></div>
<div style="left:2033px;top:1164px;width:3px;height:3px;background:#ABABAB;"></div>
<div style="left:2033px;top:1170px;width:3px;height:3px;background:#ABABAB;"></div>
<div style="left:2060px;top:1159px;width:0;height:0;border-top:6px solid transparent;border-bottom:6px solid transparent;border-right:10px solid #6E6E6E;"></div>
<div style="left:2078px;top:1159px;width:26px;height:12px;border-radius:6px;background:#6E6E6E"></div>
<div style="left:2510px;top:1159px;width:0;height:0;border-top:6px solid transparent;border-bottom:6px solid transparent;border-left:10px solid #6E6E6E;"></div>
</div></body></html>
